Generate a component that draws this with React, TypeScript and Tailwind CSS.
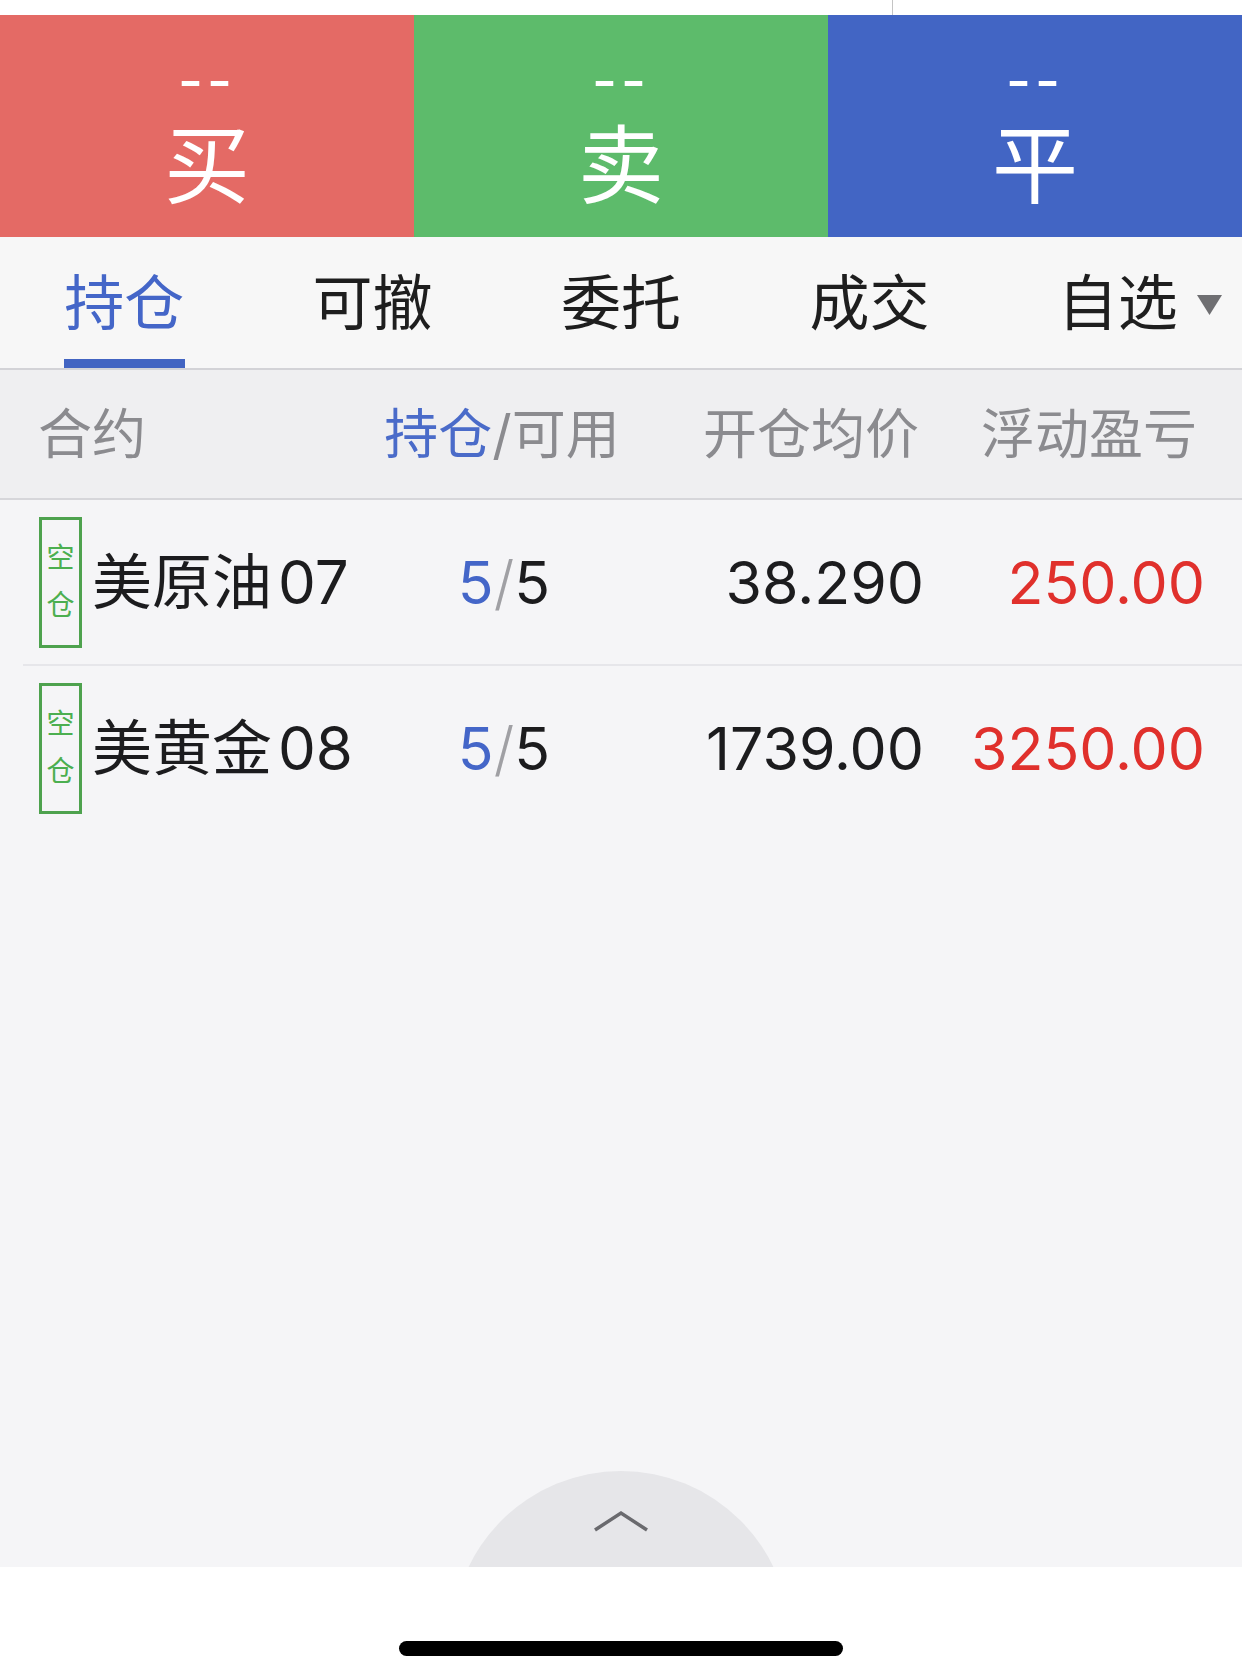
import React from 'react'

type Position = {
    name: string,
    month: string,
    hold: string,
    avail: string,
    price: string,
    profit: string
}

const positions: Position[] = [
    { name: '美原油', month: '07', hold: '5', avail: '5', price: '38.290', profit: '250.00' },
    { name: '美黄金', month: '08', hold: '5', avail: '5', price: '1739.00', profit: '3250.00' },
]

const tabs = ['持仓', '可撤', '委托', '成交', '自选']

function ActionButton({ label, color }: { label: string, color: string }) {
    return (
        <div className={`flex flex-col items-center text-white ${color}`}>
            <span className="mt-[40px] text-[54px] leading-[52px] font-medium tracking-[4px]">--</span>
            <span className="mt-[9px] text-[86px] leading-[100px]">{label}</span>
        </div>
    )
}

export default function App() {
    return (
        <div
            className="flex flex-col w-full h-[1679px] bg-white"
            style={{ fontFamily: '"Inter", "Noto Sans CJK SC", sans-serif' }}
        >
            {/* status strip */}
            <div className="flex h-[15px] shrink-0">
                <div className="w-[893px] h-full border-r border-[#c4c4c4]" />
            </div>

            {/* buy / sell / close */}
            <div className="grid grid-cols-3 h-[222px] shrink-0">
                <ActionButton label="买" color="bg-[#e46a65]" />
                <ActionButton label="卖" color="bg-[#5dbb6b]" />
                <ActionButton label="平" color="bg-[#4265c4]" />
            </div>

            {/* tabs */}
            <div className="grid grid-cols-5 h-[133px] shrink-0 bg-[#f7f7f7] border-b-2 border-[#d3d3d7]">
                {tabs.map((t, i) => (
                    <div key={t} className="relative flex items-center justify-center">
                        <span className={`relative text-[60px] leading-none ${i === 0 ? 'text-[#4466c8]' : 'text-[#1e1e1e]'}`}>
                            {t}
                            {t === '自选' && (
                                <svg className="absolute left-full top-[22px] ml-[19px]" width="25" height="20" viewBox="0 0 25 20">
                                    <path d="M0 0 H25 L12.5 20 Z" fill="#6f6f72" />
                                </svg>
                            )}
                        </span>
                        {i === 0 && <div className="absolute bottom-0 w-[121px] h-[9px] bg-[#4264c2]" />}
                    </div>
                ))}
            </div>

            {/* list */}
            <div className="relative flex-1 flex flex-col bg-[#f5f5f7] overflow-hidden">
                <div className="grid grid-cols-[380px_244px_295px_278px] pr-[45px] h-[130px] items-center bg-[#efeff1] border-b-2 border-[#d6d6da] text-[54px] text-[#8b8b8f]">
                    <span className="pl-[38px]">合约</span>
                    <span className="text-center"><span className="text-[#4a6bc9]">持仓</span>/可用</span>
                    <span className="text-right">开仓均价</span>
                    <span className="text-right">浮动盈亏</span>
                </div>

                {positions.map((p, i) => (
                    <React.Fragment key={p.name}>
                        {i > 0 && <div className="ml-[23px] h-[2px] bg-[#e6e6ea]" />}
                        <div className="grid grid-cols-[382px_244px_298px_281px] pr-[37px] h-[164px] items-center">
                            <div className="flex items-center pl-[39px]">
                                <div className="flex flex-col items-center justify-center w-[43px] h-[131px] border-[3px] border-[#4ea24e] text-[28px] leading-[47px] text-[#4caf50]">
                                    <span>空</span>
                                    <span>仓</span>
                                </div>
                                <span className="ml-[10px] text-[60px] leading-none text-[#1c1c1e] whitespace-nowrap">
                                    {p.name}<span className="ml-[6px]">{p.month}</span>
                                </span>
                            </div>
                            <span className="text-center text-[59px] leading-none">
                                <span className="text-[#4466c8]">{p.hold}</span>
                                <span className="text-[#a0a0a4] font-light">/</span>
                                <span className="text-[#1c1c1e]">{p.avail}</span>
                            </span>
                            <span className="text-right text-[59px] leading-none text-[#1c1c1e]">{p.price}</span>
                            <span className="text-right text-[59px] leading-none text-[#e0302c]">{p.profit}</span>
                        </div>
                    </React.Fragment>
                ))}

                {/* pull-up handle */}
                <div className="absolute left-1/2 -translate-x-1/2 bottom-[-242px] w-[338px] h-[338px] rounded-full bg-[#e6e6e9] flex justify-center pt-[39px]">
                    <svg width="56" height="22" viewBox="0 0 56 22">
                        <path d="M2 20 L28 3 L54 20" fill="none" stroke="#6a6a6e" strokeWidth="3.5" />
                    </svg>
                </div>
            </div>

            {/* home indicator */}
            <div className="h-[112px] shrink-0 bg-white flex justify-center pt-[74px]">
                <div className="w-[444px] h-[15px] rounded-full bg-black" />
            </div>
        </div>
    )
}
